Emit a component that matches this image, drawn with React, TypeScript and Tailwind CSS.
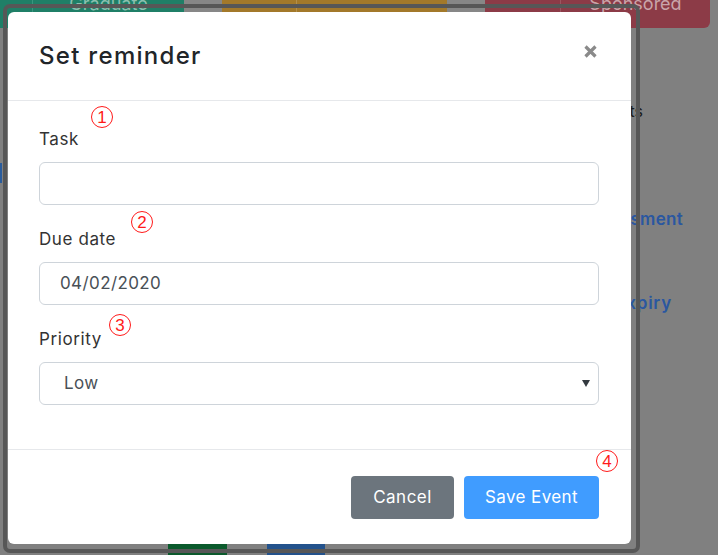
import React from "react";

const font = { fontFamily: "Inter, 'Noto Sans', sans-serif" };

function Circled({ n, className }: { n: string; className: string }) {
  return (
    <span
      className={`absolute flex h-[22px] w-[22px] items-center justify-center rounded-full border-[1.5px] border-[#ff1a1a] text-[17px] leading-none text-[#ff1a1a] ${className}`}
      style={{ fontFamily: "'Liberation Sans', sans-serif" }}
    >
      {n}
    </span>
  );
}

export default function App() {
  return (
    <div className="relative h-[555px] w-[718px] overflow-hidden bg-[#808080]" style={font}>
      {/* page behind the overlay */}
      <div className="flex h-full flex-col">
        <div className="flex h-[28px] shrink-0">
          <div className="w-[33px] border-r border-[#3a957e] bg-[#1f7f67]" />
          <div className="w-[151px] overflow-hidden bg-[#1f7f67] text-center">
            <div className="mt-[-8px] whitespace-nowrap text-[18px] leading-[24px] text-[#8dbfb0]">Graduate</div>
          </div>
          <div className="w-[38px] bg-[#878787]" />
          <div className="w-[75px] border-r border-[#b38f4c] bg-[#a3792a]" />
          <div className="w-[150px] bg-[#a3792a]" />
          <div className="w-[38px] bg-[#878787]" />
          <div className="w-[76px] border-r border-[#9c5560] bg-[#8c3b47]" />
          <div className="w-[149px] overflow-hidden rounded-br-[6px] bg-[#8c3b47] text-center">
            <div className="mt-[-8px] whitespace-nowrap text-[18px] leading-[24px] text-[#c9a5aa]">Sponsored</div>
          </div>
        </div>
        <div className="flex flex-1">
          <div className="w-[560px] pt-[135px]">
            <div className="h-[20px] w-[2px] bg-[#2a5c9c]" />
          </div>
          <div className="flex flex-col pt-[72px]">
            <div className="w-[83px] text-right text-[16px] leading-[22px] text-[#1a1a1a]">Contracts</div>
            <div className="mt-[86px] w-[123px] whitespace-nowrap text-right text-[17px] font-semibold leading-[22px] tracking-[0.3px] text-[#2a57a0]">
              Assessment
            </div>
            <div className="mt-[62px] w-[112px] whitespace-nowrap text-right text-[17px] font-semibold leading-[22px] tracking-[0.8px] text-[#2a57a0]">
              Visa Expiry
            </div>
          </div>
        </div>
        <div className="flex h-[12px] shrink-0">
          <div className="w-[168px]" />
          <div className="w-[59px] bg-[#0b5a2c]" />
          <div className="w-[40px]" />
          <div className="w-[58px] bg-[#23528c]" />
        </div>
      </div>

      {/* highlight frame */}
      <div className="absolute left-[3px] top-[4px] h-[549px] w-[637px] rounded-[7px] border-[4px] border-[#575757]" />

      {/* modal */}
      <div className="absolute left-[8px] top-[12px] flex h-[532px] w-[623px] flex-col rounded-[6px] bg-white">
        <div className="flex h-[89px] shrink-0 items-center justify-between border-b border-[#e6e8eb] pl-[31px] pr-[34px]">
          <h2 className="mt-[-1px] whitespace-nowrap text-[24px] font-medium tracking-[1.3px] text-[#212529]">Set reminder</h2>
          <svg width="13" height="13" viewBox="0 0 13 13" className="mt-[-10px]">
            <path d="M1.5 1.5 L11.5 11.5 M11.5 1.5 L1.5 11.5" stroke="#8a8a8a" strokeWidth="3.2" />
          </svg>
        </div>
        <div className="flex flex-1 flex-col px-[31px] pt-[26px]">
          <label className="text-[17px] leading-[24px] tracking-[0.6px] text-[#333]">Task</label>
          <div className="mt-[11px] h-[43px] w-[560px] rounded-[6px] border border-[#ced4da]" />
          <label className="mt-[22px] text-[17px] leading-[24px] tracking-[0.6px] text-[#333]">Due date</label>
          <div className="mt-[11px] flex h-[43px] w-[560px] items-center rounded-[6px] border border-[#ced4da] pl-[20px] text-[17px] tracking-[0.4px] text-[#495057]">
            04/02/2020
          </div>
          <label className="mt-[22px] text-[17px] leading-[24px] tracking-[0.6px] text-[#333]">Priority</label>
          <div className="mt-[11px] flex h-[43px] w-[560px] items-center justify-between rounded-[6px] border border-[#ced4da] pl-[24px] pr-[8px] text-[17px] tracking-[0.4px] text-[#495057]">
            <span>Low</span>
            <svg width="8" height="7" viewBox="0 0 8 7">
              <path d="M0 0 L8 0 L4 7 Z" fill="#343a40" />
            </svg>
          </div>
        </div>
        <div className="flex h-[95px] shrink-0 items-start justify-end gap-[10px] border-t border-[#e6e8eb] pr-[32px] pt-[26px]">
          <button className="h-[43px] w-[103px] rounded-[4px] bg-[#6c757d] text-[17px] tracking-[0.5px] text-white">
            Cancel
          </button>
          <button className="h-[43px] w-[135px] rounded-[4px] bg-[#409cff] text-[17px] tracking-[0.4px] text-white">
            Save Event
          </button>
        </div>

        <Circled n="1" className="left-[83px] top-[94px]" />
        <Circled n="2" className="left-[123px] top-[199px]" />
        <Circled n="3" className="left-[101px] top-[302px]" />
        <Circled n="4" className="left-[588px] top-[438px]" />
      </div>
    </div>
  );
}
